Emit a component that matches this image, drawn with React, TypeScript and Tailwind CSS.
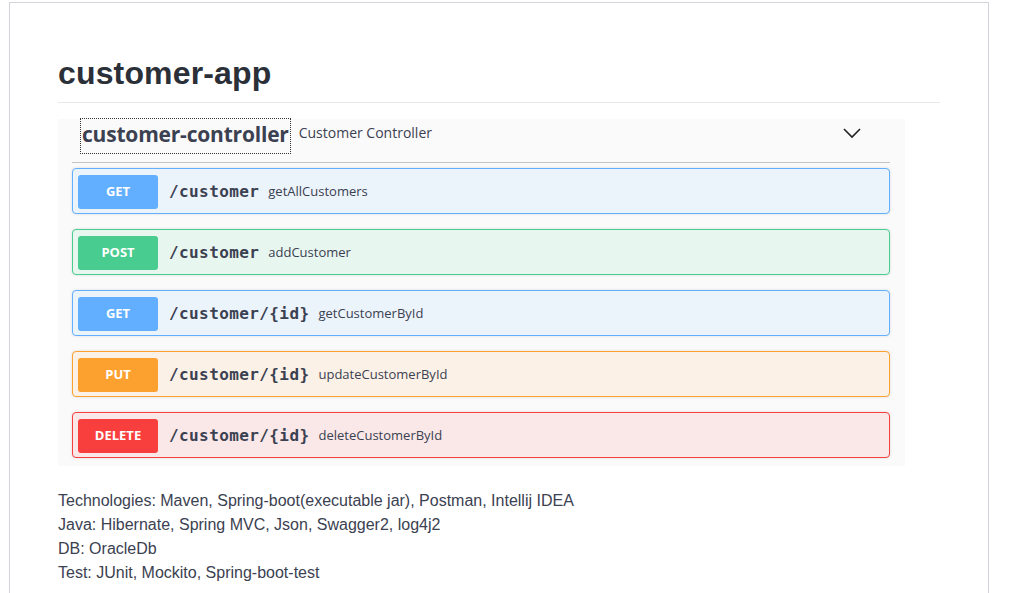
import React from "react";

type Op = {
  method: string;
  path: string;
  summary: string;
  bg: string;
  border: string;
  badge: string;
};

const ops: Op[] = [
  { method: "GET", path: "/customer", summary: "getAllCustomers", bg: "bg-[#ebf3fb]", border: "border-[#61affe]", badge: "bg-[#61affe]" },
  { method: "POST", path: "/customer", summary: "addCustomer", bg: "bg-[#e8f6f0]", border: "border-[#49cc90]", badge: "bg-[#49cc90]" },
  { method: "GET", path: "/customer/{id}", summary: "getCustomerById", bg: "bg-[#ebf3fb]", border: "border-[#61affe]", badge: "bg-[#61affe]" },
  { method: "PUT", path: "/customer/{id}", summary: "updateCustomerById", bg: "bg-[#fbf1e6]", border: "border-[#fca130]", badge: "bg-[#fca130]" },
  { method: "DELETE", path: "/customer/{id}", summary: "deleteCustomerById", bg: "bg-[#fae7e7]", border: "border-[#f93e3e]", badge: "bg-[#f93e3e]" },
];

export default function App() {
  return (
    <div className="min-h-screen bg-white text-[#3b4151]">
      <div className="ml-[9px] mt-[2px] w-[980px] min-h-[591px] border-x border-t border-[#d3d3d9] pl-[48px]">
        <div className="w-[882px] pt-[51px]">
          <h1
            className="text-[32px] font-bold leading-[38px] tracking-[0.15px] text-[#2b2f38]"
            style={{ fontFamily: '"Liberation Sans", Arial, sans-serif' }}
          >
            customer-app
          </h1>
          <div className="mt-[10px] h-px bg-[#e8e8e8]" />
          <div className="mt-[16px] w-[847px] bg-[#fafafa] pl-[14px] pr-[15px] pb-[8px]">
            <div className="flex h-[44px] items-start border-b border-[#c4c4c8]">
              <div
                className="ml-[9px] flex h-[34px] items-center pb-[4px] outline-1 outline-dotted outline-[#333] px-px"
                style={{ fontFamily: '"Open Sans", sans-serif' }}
              >
                <span className="text-[21px] font-bold leading-none tracking-[-0.2px] text-[#3b4151]">customer-controller</span>
              </div>
              <span
                className="ml-[9px] mt-[4px] text-[14px] leading-[20px] text-[#3b4151]"
                style={{ fontFamily: '"Open Sans", sans-serif' }}
              >
                Customer Controller
              </span>
              <div className="flex-1" />
              <svg className="mr-[29px] mt-[8px]" width="18" height="12" viewBox="0 0 18 12">
                <path d="M1 2 L9 10 L17 2" fill="none" stroke="#222" strokeWidth="1.6" />
              </svg>
            </div>
            <div className="mt-[5px] flex flex-col gap-[15px]">
              {ops.map((op, i) => (
                <div
                  key={i}
                  className={`flex h-[46px] items-center rounded-[4px] border ${op.border} ${op.bg} px-[5px] pt-[1px] shadow-[0_0_3px_rgba(0,0,0,0.12)]`}
                >
                  <div
                    className={`flex h-[34px] w-[80px] items-center justify-center rounded-[3px] ${op.badge} text-[13px] font-bold text-white`}
                    style={{ fontFamily: '"Open Sans", sans-serif' }}
                  >
                    {op.method}
                  </div>
                  <span
                    className="pl-[11px] pr-[9px] text-[16px] font-bold tracking-[0.4px] text-[#3b4151]"
                    style={{ fontFamily: '"DejaVu Sans Mono", monospace' }}
                  >
                    {op.path}
                  </span>
                  <span
                    className="text-[13px] text-[#3b4151]"
                    style={{ fontFamily: '"Open Sans", sans-serif' }}
                  >
                    {op.summary}
                  </span>
                </div>
              ))}
            </div>
          </div>
          <div
            className="mt-[23px] text-[16px] leading-[24px] text-[#3b4151]"
            style={{ fontFamily: '"Liberation Sans", Arial, sans-serif' }}
          >
            <p>Technologies: Maven, Spring-boot(executable jar), Postman, Intellij IDEA</p>
            <p>Java: Hibernate, Spring MVC, Json, Swagger2, log4j2</p>
            <p>DB: OracleDb</p>
            <p>Test: JUnit, Mockito, Spring-boot-test</p>
          </div>
        </div>
      </div>
    </div>
  );
}
